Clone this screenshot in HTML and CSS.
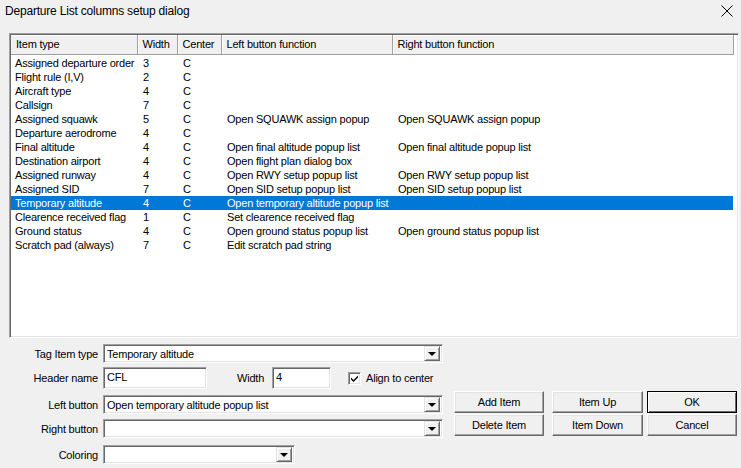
FILE: index.html
```html
<!DOCTYPE html>
<html>
<head>
<meta charset="utf-8">
<title>Departure List columns setup dialog</title>
<link rel="stylesheet" href="styles.css">
</head>
<body>
<div class="dlg">

<div class="caption">
	<span class="caption_text">Departure List columns setup dialog</span>
	<span class="close"><svg width="12" height="12" viewBox="0 0 12 12"><path d="M0.5 0.5 L11.5 11.5 M11.5 0.5 L0.5 11.5" stroke="#000" stroke-width="1" fill="none"/></svg></span>
</div>

<div class="list">
	<table class="grid">
		<colgroup>
			<col class="c_type"><col class="c_width"><col class="c_center"><col class="c_left"><col class="c_right">
		</colgroup>
		<thead>
			<tr><th>Item type</th><th>Width</th><th>Center</th><th>Left button function</th><th class="last">Right button function</th></tr>
		</thead>
		<tbody>
			<tr><td>Assigned departure order</td><td>3</td><td>C</td><td></td><td></td></tr>
			<tr><td>Flight rule (I,V)</td><td>2</td><td>C</td><td></td><td></td></tr>
			<tr><td>Aircraft type</td><td>4</td><td>C</td><td></td><td></td></tr>
			<tr><td>Callsign</td><td>7</td><td>C</td><td></td><td></td></tr>
			<tr><td>Assigned squawk</td><td>5</td><td>C</td><td>Open SQUAWK assign popup</td><td>Open SQUAWK assign popup</td></tr>
			<tr><td>Departure aerodrome</td><td>4</td><td>C</td><td></td><td></td></tr>
			<tr><td>Final altitude</td><td>4</td><td>C</td><td>Open final altitude popup list</td><td>Open final altitude popup list</td></tr>
			<tr><td>Destination airport</td><td>4</td><td>C</td><td>Open flight plan dialog box</td><td></td></tr>
			<tr><td>Assigned runway</td><td>4</td><td>C</td><td>Open RWY setup popup list</td><td>Open RWY setup popup list</td></tr>
			<tr><td>Assigned SID</td><td>7</td><td>C</td><td>Open SID setup popup list</td><td>Open SID setup popup list</td></tr>
			<tr class="sel"><td>Temporary altitude</td><td>4</td><td>C</td><td>Open temporary altitude popup list</td><td></td></tr>
			<tr><td>Clearence received flag</td><td>1</td><td>C</td><td>Set clearence received flag</td><td></td></tr>
			<tr><td>Ground status</td><td>4</td><td>C</td><td>Open ground status popup list</td><td>Open ground status popup list</td></tr>
			<tr><td>Scratch pad (always)</td><td>7</td><td>C</td><td>Edit scratch pad string</td><td></td></tr>
		</tbody>
	</table>
</div>

<div class="bottom">
	<div class="form">
		<div class="row r_type">
			<span class="lbl">Tag Item type</span>
			<div class="combo wide"><span class="val">Temporary altitude</span><span class="arrow"><i></i></span></div>
		</div>
		<div class="row r_header">
			<span class="lbl">Header name</span>
			<div class="edit e_name">CFL</div>
			<span class="lbl_w">Width</span>
			<div class="edit e_width">4</div>
			<span class="check"><svg width="9" height="9" viewBox="0 0 9 9"><path d="M1 3.5 L3.5 6 L8 1.5 L8 3.5 L3.5 8 L1 5.5 Z" fill="#000"/></svg></span>
			<span class="check_text">Align to center</span>
		</div>
		<div class="row r_left">
			<span class="lbl">Left button</span>
			<div class="combo wide"><span class="val">Open temporary altitude popup list</span><span class="arrow"><i></i></span></div>
		</div>
		<div class="row r_right">
			<span class="lbl">Right button</span>
			<div class="combo wide"><span class="val"></span><span class="arrow"><i></i></span></div>
		</div>
		<div class="row r_color">
			<span class="lbl">Coloring</span>
			<div class="combo narrow"><span class="val"></span><span class="arrow"><i></i></span></div>
		</div>
	</div>

	<div class="buttons">
		<div class="btn b1">Add Item</div>
		<div class="btn b2">Item Up</div>
		<div class="btn b3 default">OK</div>
		<div class="btn b1">Delete Item</div>
		<div class="btn b2">Item Down</div>
		<div class="btn b3">Cancel</div>
	</div>
</div>

</div>
</body>
</html>
```

FILE: styles.css
```css
*{margin:0;padding:0;box-sizing:border-box}
body{background:#f0f0f0;font-family:"Liberation Sans",Arial,sans-serif;font-size:11px;letter-spacing:-0.2px;color:#000;width:741px;height:468px;overflow:hidden}

.caption{height:33px;display:flex;justify-content:space-between;padding:3px 8px 0 5px;line-height:16px;font-size:12px}
.close{padding-top:2px}

.list{margin-left:9px;width:730px;height:305px;background:#fff;border:1px solid;border-color:#a0a0a0 #fff #fff #a0a0a0;box-shadow:inset 1px 1px #696969,inset -1px -1px #e3e3e3;padding:1px;overflow:hidden}
.grid{border-collapse:collapse;table-layout:fixed;width:722px}
.c_type{width:126px}
.c_width{width:40px}
.c_center{width:44px}
.c_left{width:171px}
.c_right{width:341px}
.grid th{height:19px;font-weight:normal;text-align:left;padding-left:5px;background:#f0f0f0;border-right:1px solid #a0a0a0;border-bottom:1px solid #a0a0a0;box-shadow:inset 0 1px #fff,inset 1px 0 #fff;white-space:nowrap;overflow:hidden}
.grid th:first-child{box-shadow:inset 0 1px #fff}
.grid td{height:14px;line-height:14px;padding-left:6px;white-space:nowrap;overflow:hidden}
.grid tbody tr:first-child td{padding-top:1px;height:15px}
.grid td:first-child{padding-left:4px}
.grid tr.sel td{background:#0078d7;color:#fff}

.bottom{display:flex;margin-top:6px}
.form{width:443px}
.row{display:flex;align-items:center}
.r_type{height:19px}
.r_header{height:22px;margin-top:4px}
.r_left{height:19px;margin-top:6px}
.r_right{height:19px;margin-top:5px}
.r_color{height:19px;margin-top:7px}
.lbl{width:100px;text-align:right;padding-right:2px;white-space:nowrap}

.combo{height:19px;background:#fff;border:1px solid;border-color:#a0a0a0 #fff #fff #a0a0a0;box-shadow:inset 1px 1px #696969,inset -1px -1px #e3e3e3;display:flex;align-items:center;justify-content:space-between;padding:1px 2px 1px 3px;margin-left:3px}
.wide{width:340px}
.narrow{width:192px}
.val{white-space:nowrap}
.arrow{width:16px;height:15px;background:#f0f0f0;border:1px solid;border-color:#e3e3e3 #696969 #696969 #e3e3e3;box-shadow:inset 1px 1px #fff,inset -1px -1px #a0a0a0;display:flex;align-items:center;justify-content:center}
.arrow i{width:0;height:0;border-left:4px solid transparent;border-right:4px solid transparent;border-top:4px solid #000;margin-top:1px}

.edit{height:22px;background:#fff;border:1px solid;border-color:#a0a0a0 #fff #fff #a0a0a0;box-shadow:inset 1px 1px #696969,inset -1px -1px #e3e3e3;padding:1px 3px;line-height:16px}
.e_name{width:104px;margin-left:3px}
.lbl_w{margin-left:30px;width:35px}
.e_width{width:59px}
.check{width:13px;height:13px;margin-left:17px;background:#fff;border:1px solid;border-color:#a0a0a0 #fff #fff #a0a0a0;box-shadow:inset 1px 1px #696969,inset -1px -1px #e3e3e3;display:flex;align-items:center;justify-content:center}
.check_text{margin-left:5px;white-space:nowrap}

.buttons{margin-left:11px;margin-top:47px;display:grid;grid-template-columns:90px 99px 94px;row-gap:1px;height:45px}
.btn{height:22px;background:#f0f0f0;border:1px solid;border-color:#fff #696969 #696969 #fff;box-shadow:inset -1px -1px #a0a0a0,inset 1px 1px #e3e3e3;text-align:center;line-height:20px}
.b1{width:90px}
.b2{margin-left:8px;width:91px}
.b3{margin-left:4px;width:90px}
.default{border:1px solid #000;box-shadow:inset 1px 1px #fff,inset -1px -1px #696969}
```
